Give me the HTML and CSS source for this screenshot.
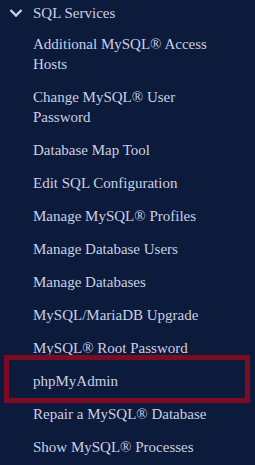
FILE: index.html
```html
<!DOCTYPE html>
<html lang="en">
<head>
  <meta charset="UTF-8">
  <title>SQL Services</title>
  <link rel="stylesheet" href="styles.css">
</head>
<body>

  <div class="group">
    <div class="group-title">
      <svg class="chevron" width="14" height="10" viewBox="0 0 14 10">
        <path d="M1.5 2 L7 7.5 L12.5 2" fill="none" stroke="#c9d1e3" stroke-width="2.4"/>
      </svg>
      <span>SQL Services</span>
    </div>

    <ul class="menu">
      <li><a href="#">Additional MySQL® Access Hosts</a></li>
      <li><a href="#">Change MySQL® User Password</a></li>
      <li><a href="#">Database Map Tool</a></li>
      <li><a href="#">Edit SQL Configuration</a></li>
      <li><a href="#">Manage MySQL® Profiles</a></li>
      <li><a href="#">Manage Database Users</a></li>
      <li><a href="#">Manage Databases</a></li>
      <li><a href="#">MySQL/MariaDB Upgrade</a></li>
      <li><a href="#">MySQL® Root Password</a></li>
      <li class="marked"><a href="#">phpMyAdmin</a></li>
      <li><a href="#">Repair a MySQL® Database</a></li>
      <li><a href="#">Show MySQL® Processes</a></li>
    </ul>
  </div>

</body>
</html>
```

FILE: styles.css
```css
* { margin: 0; padding: 0; box-sizing: border-box; }
html, body {
  width: 100%;
  height: 100%;
  background: #0c1a3c;
  font-family: "Liberation Serif", "Times New Roman", serif;
  font-size: 15px;
  line-height: 20px;
  color: #c9d1e3;
  overflow: hidden;
}
.group-title {
  display: flex;
  align-items: center;
  padding: 3px 0 4px 9px;
}
.group-title .chevron {
  margin-right: 10px;
}
.menu {
  list-style: none;
}
.menu li {
  position: relative;
  padding: 7px 20px 6px 33px;
}
.menu li a {
  color: #c9d1e3;
  text-decoration: none;
}
/* red frame drawn round the selected entry */
.menu li.marked::after {
  content: "";
  position: absolute;
  top: -9px;
  bottom: -6px;
  left: 4px;
  right: 5px;
  border: 5px solid #7e0b24;
}
```
